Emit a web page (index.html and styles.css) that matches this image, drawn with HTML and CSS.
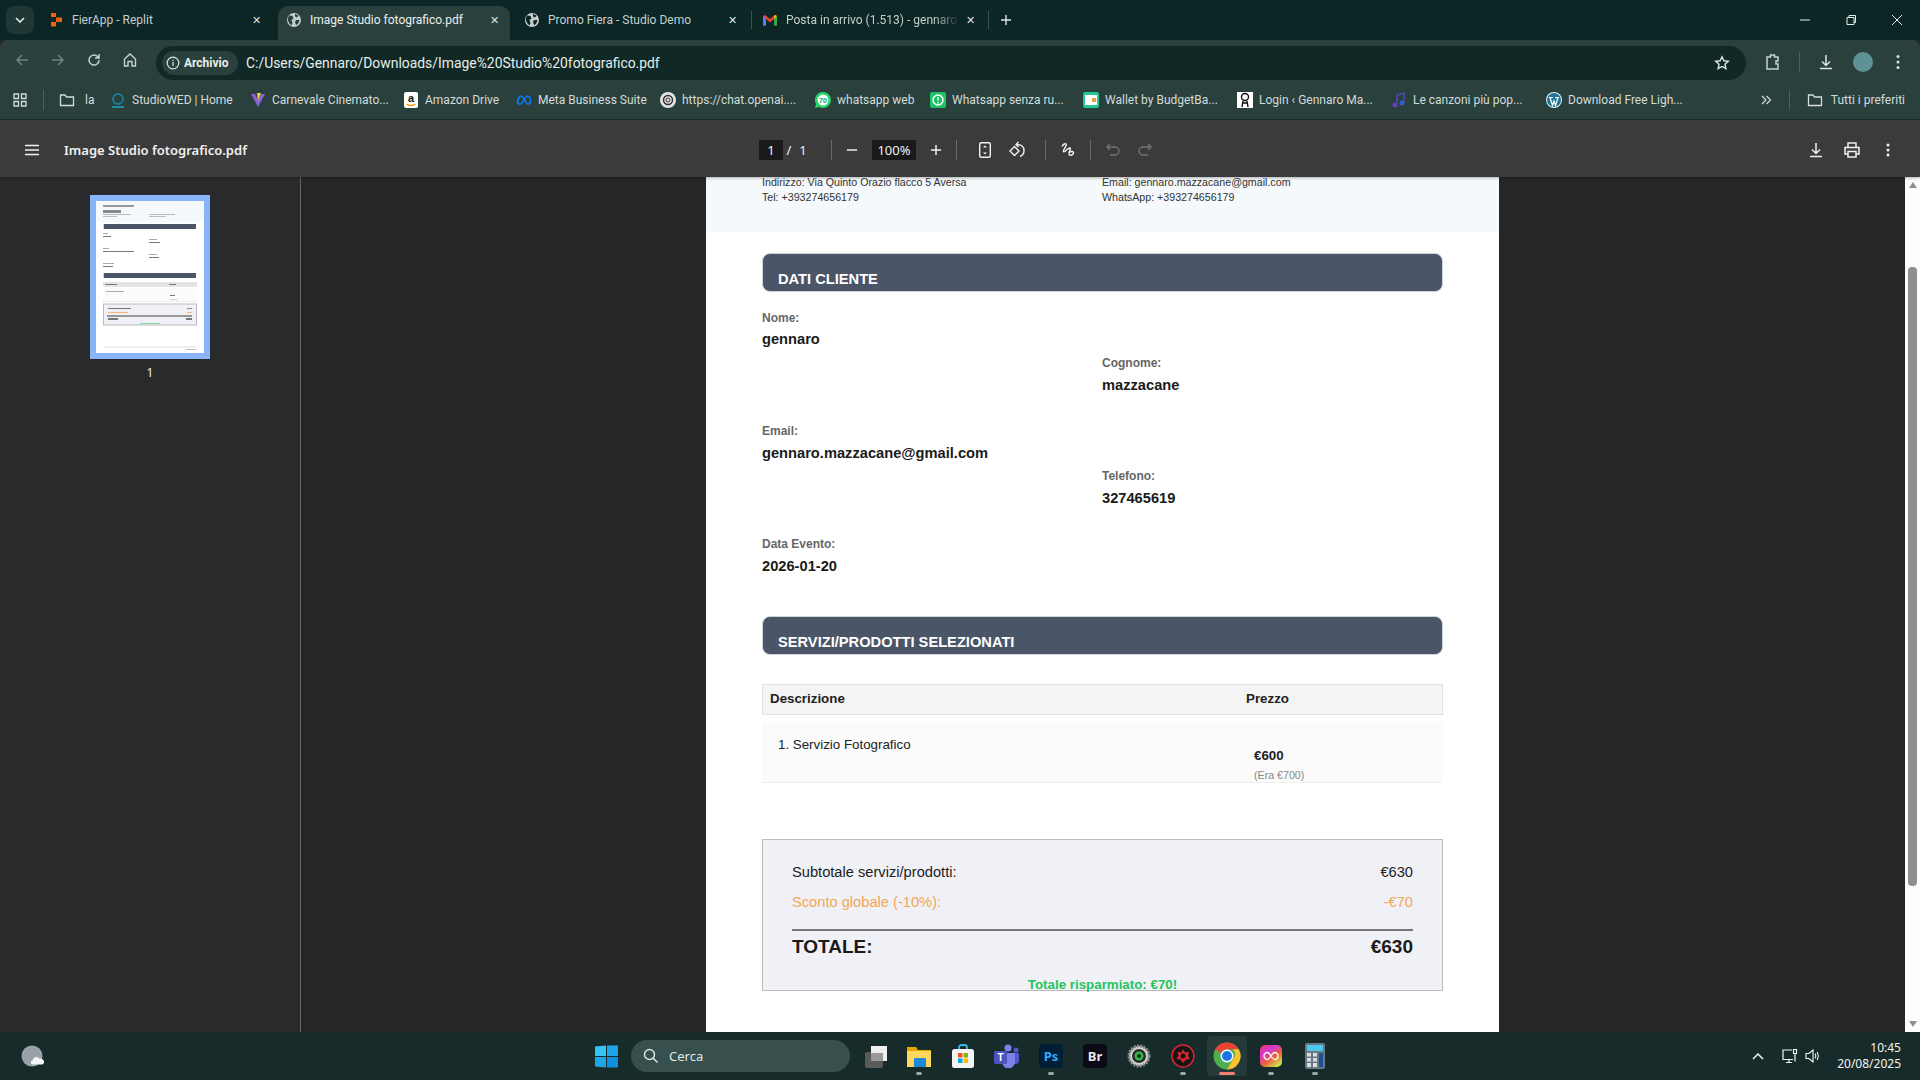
FILE: index.html
```html
<!DOCTYPE html>
<html lang="it">
<head>
    <meta charset="UTF-8">
    <title>Image Studio fotografico.pdf</title>
    <link rel="stylesheet" href="styles.css">
</head>
<body>
    <!-- tab strip -->
    <div class="tabstrip">
        <div class="tab-search"><svg width="10" height="6" viewBox="0 0 10 6"><path d="M1 1l4 4 4-4" fill="none" stroke="#e3ebe9" stroke-width="1.6"/></svg></div>
        <div class="tab">
            <svg class="tab-icon" viewBox="0 0 16 16"><path d="M3 1h5v4H3zM8 5.500h6v4.500H8zM3 10h5v4.500H3z" fill="#f26207"/></svg>
            <span class="tab-title">FierApp - Replit</span>
            <span class="tab-close">✕</span>
        </div>
        <div class="tab tab-active">
            <svg class="tab-icon" viewBox="0 0 16 16"><circle cx="8" cy="8" r="7" fill="#c3cdcb"/><path d="M3 3.500l3.500.5 1 2.500-2 1.500 1 3-1 2.500C3.500 12 1.500 9 2 6zM9 2l3.500 1.500-1.500 2-2-1zM10 8l3.500 0-1.500 4-2 1-1-3z" fill="#2a403d"/></svg>
            <span class="tab-title">Image Studio fotografico.pdf</span>
            <span class="tab-close">✕</span>
        </div>
        <div class="tab">
            <svg class="tab-icon" viewBox="0 0 16 16"><circle cx="8" cy="8" r="7" fill="#c3cdcb"/><path d="M3 3.500l3.500.5 1 2.500-2 1.500 1 3-1 2.500C3.500 12 1.500 9 2 6zM9 2l3.500 1.500-1.500 2-2-1zM10 8l3.500 0-1.500 4-2 1-1-3z" fill="#0c2625"/></svg>
            <span class="tab-title">Promo Fiera - Studio Demo</span>
            <span class="tab-close">✕</span>
        </div>
        <div class="tab tab-sep">
            <svg class="tab-icon" viewBox="0 0 16 16"><path d="M1 13.500V4l2 -1 5 4 5-4 2 1v9.500h-3V7L8 10.500 4 7v6.500z" fill="#ea4335"/><path d="M1 4v9.500h3V7z" fill="#4285f4"/><path d="M15 4v9.500h-3V7z" fill="#34a853"/><path d="M12 7l3-3-2-1-1 1z" fill="#fbbc04"/></svg>
            <span class="tab-title tab-title-fade">Posta in arrivo (1.513) - gennaro</span>
            <span class="tab-close">✕</span>
        </div>
        <div class="tab-new">
            <svg width="12" height="12" viewBox="0 0 12 12"><path d="M6 1v10M1 6h10" stroke="#dfe7e5" stroke-width="1.400"/></svg>
        </div>
        <div class="win-controls">
            <svg width="12" height="12" viewBox="0 0 12 12"><path d="M1 6h10" stroke="#e5ecea" stroke-width="1"/></svg>
            <svg width="12" height="12" viewBox="0 0 12 12"><path d="M2 3.500h7v7H2zM4 3.500V1.500h6.500v7H9" fill="none" stroke="#e5ecea" stroke-width="1"/></svg>
            <svg width="12" height="12" viewBox="0 0 12 12"><path d="M1 1l10 10M11 1L1 11" stroke="#e5ecea" stroke-width="1"/></svg>
        </div>
    </div>

    <!-- address bar -->
    <div class="toolbar">
        <div class="nav-btn"><svg width="16" height="16" viewBox="0 0 16 16"><path d="M14 8H3M8 3L3 8l5 5" fill="none" stroke="#6f8482" stroke-width="1.500"/></svg></div>
        <div class="nav-btn"><svg width="16" height="16" viewBox="0 0 16 16"><path d="M2 8h11M8 3l5 5-5 5" fill="none" stroke="#6f8482" stroke-width="1.500"/></svg></div>
        <div class="nav-btn"><svg width="16" height="16" viewBox="0 0 16 16"><path d="M13 8a5 5 0 1 1-1.500-3.500L13 6M13 2v4H9" fill="none" stroke="#c8d2d0" stroke-width="1.500"/></svg></div>
        <div class="nav-btn"><svg width="16" height="16" viewBox="0 0 16 16"><path d="M2.500 7L8 2l5.500 5v7H10V9.500H6V14H2.500z" fill="none" stroke="#c8d2d0" stroke-width="1.400"/></svg></div>
        <div class="omnibox">
            <div class="chip">
                <svg width="14" height="14" viewBox="0 0 14 14"><circle cx="7" cy="7" r="5.800" fill="none" stroke="#dbe4e2" stroke-width="1.200"/><path d="M7 6v4M7 3.800v1.200" stroke="#dbe4e2" stroke-width="1.200"/></svg>
                <span>Archivio</span>
            </div>
            <span class="url">C:/Users/Gennaro/Downloads/Image%20Studio%20fotografico.pdf</span>
            <svg class="star" width="16" height="16" viewBox="0 0 16 16"><path d="M8 1.800l1.900 4 4.400.5-3.300 3 .9 4.400L8 11.500l-3.900 2.200.9-4.400-3.300-3 4.400-.5z" fill="none" stroke="#e0e8e6" stroke-width="1.400"/></svg>
        </div>
        <div class="toolbar-right">
            <svg width="18" height="18" viewBox="0 0 18 18"><path d="M3 4h3.500V2h4v2H14v4h-2v3h2v5H3z" fill="none" stroke="#c8d2d0" stroke-width="1.500"/></svg>
            <span class="toolbar-sep"></span>
            <svg width="18" height="18" viewBox="0 0 18 18"><path d="M9 2v10M5 8.500L9 12.500l4-4M3 15.500h12" fill="none" stroke="#dbe4e2" stroke-width="1.500"/></svg>
            <span class="avatar"></span>
            <svg width="4" height="16" viewBox="0 0 4 16"><circle cx="2" cy="2.500" r="1.500" fill="#dbe4e2"/><circle cx="2" cy="8" r="1.500" fill="#dbe4e2"/><circle cx="2" cy="13.500" r="1.500" fill="#dbe4e2"/></svg>
        </div>
    </div>

    <!-- bookmarks -->
    <div class="bookmarks">
        <svg class="bm-apps" width="14" height="14" viewBox="0 0 14 14"><path d="M1 1h4.500v4.500H1zM8.500 1H13v4.500H8.500zM1 8.500h4.500V13H1zM8.500 8.500H13V13H8.500z" fill="none" stroke="#d3dcda" stroke-width="1.300"/></svg>
        <span class="bm-sep"></span>
        <div class="bm-list">
            <div class="bm bm-first"><svg class="bm-icon" viewBox="0 0 16 16"><path d="M1.500 3h4.500l1.500 2h7v8.500h-13z" fill="none" stroke="#d3dcda" stroke-width="1.300"/></svg><span>la</span></div>
            <div class="bm"><svg class="bm-icon" viewBox="0 0 16 16"><circle cx="8" cy="7" r="5" fill="none" stroke="#1b7f96" stroke-width="1.800"/><path d="M2 15h12" stroke="#1b9fb9" stroke-width="1.600"/></svg><span>StudioWED | Home</span></div>
            <div class="bm"><svg class="bm-icon" viewBox="0 0 16 16"><path d="M1 2l7 13 7-13-4 0-3 6-3-6z" fill="#8a63d2"/><path d="M7 1h4L8 9z" fill="#f7c948"/></svg><span>Carnevale Cinemato...</span></div>
            <div class="bm"><svg class="bm-icon" viewBox="0 0 16 16"><rect x="1" width="14" height="16" rx="2" fill="#fff"/><text x="8" y="10" class="bm-letter">a</text><path d="M3.500 12c3 2 6 2 9 0" fill="none" stroke="#f79400" stroke-width="1.300"/></svg><span>Amazon Drive</span></div>
            <div class="bm"><svg class="bm-icon" viewBox="0 0 16 16"><path d="M1.500 11c0-4 2-7 3.500-7 2.500 0 5 8 7 8 1.500 0 2.500-1.500 2.500-3.500 0-2.500-1.500-4.500-3-4.500-2.500 0-5 8-7 8-1.500 0-3-.5-3-1z" fill="none" stroke="#0a7cff" stroke-width="1.600"/></svg><span>Meta Business Suite</span></div>
            <div class="bm"><svg class="bm-icon" viewBox="0 0 16 16"><circle cx="8" cy="8" r="8" fill="#e4e4e4"/><circle cx="8" cy="8" r="4.500" fill="none" stroke="#333" stroke-width="1.500"/><circle cx="8" cy="8" r="2" fill="none" stroke="#333"/></svg><span>https://chat.openai....</span></div>
            <div class="bm"><svg class="bm-icon" viewBox="0 0 16 16"><path d="M8 0a8 8 0 0 1 0 16c-1.500 0-3-.5-4-1l-4 1 1-4A8 8 0 0 1 8 0z" fill="#25d366"/><circle cx="8" cy="8" r="5.500" fill="#fff"/><text x="8" y="10.500" class="bm-num">70</text></svg><span>whatsapp web</span></div>
            <div class="bm"><svg class="bm-icon" viewBox="0 0 16 16"><rect width="16" height="16" rx="2" fill="#1fc266"/><circle cx="8" cy="8" r="5" fill="none" stroke="#fff" stroke-width="1.500"/><path d="M8 5v3.500M8 10v1.500" stroke="#fff" stroke-width="1.300"/></svg><span>Whatsapp senza ru...</span></div>
            <div class="bm"><svg class="bm-icon" viewBox="0 0 16 16"><rect width="16" height="16" rx="2" fill="#27c49a"/><rect x="2" y="3" width="12" height="10" fill="#fff"/><rect x="9" y="6" width="4" height="4" fill="#f59b42"/></svg><span>Wallet by BudgetBa...</span></div>
            <div class="bm"><svg class="bm-icon" viewBox="0 0 16 16"><rect width="16" height="16" fill="#fff"/><circle cx="8" cy="5" r="3.500" fill="none" stroke="#111" stroke-width="1.400"/><path d="M6 9l-1 6M10 9l1 6M6 11h4" stroke="#111" stroke-width="1.400"/></svg><span>Login ‹ Gennaro Ma...</span></div>
            <div class="bm"><svg class="bm-icon" viewBox="0 0 16 16"><path d="M6 12V3l7-2v9" fill="none" stroke="#4a49b8" stroke-width="1.600"/><circle cx="4" cy="13" r="2.500" fill="#6b3fb5"/><circle cx="11" cy="11" r="2.500" fill="#2e62c9"/></svg><span>Le canzoni più pop...</span></div>
            <div class="bm"><svg class="bm-icon" viewBox="0 0 16 16"><circle cx="8" cy="8" r="8" fill="#e8eef2"/><circle cx="8" cy="8" r="7" fill="#21759b"/><path d="M3 5.500h4M9 5.500h4M4 5.500l2.500 8L8 9l1.500 4.500 2.500-8" fill="none" stroke="#fff" stroke-width="1.200"/></svg><span>Download Free Ligh...</span></div>
        </div>
        <div class="bm-more">
            <svg width="12" height="12" viewBox="0 0 12 12"><path d="M2 2l4 4-4 4M6.500 2l4 4-4 4" fill="none" stroke="#d3dcda" stroke-width="1.200"/></svg>
            <span class="bm-sep"></span>
            <div class="bm"><svg class="bm-icon" viewBox="0 0 16 16"><path d="M1.500 3h4.500l1.500 2h7v8.500h-13z" fill="none" stroke="#d3dcda" stroke-width="1.300"/></svg><span>Tutti i preferiti</span></div>
        </div>
    </div>

    <!-- pdf viewer toolbar -->
    <div class="pdf-toolbar">
        <div class="pdf-left">
            <svg class="pdf-menu" width="16" height="12" viewBox="0 0 16 12"><path d="M1 1.500h14M1 6h14M1 10.500h14" stroke="#f1f1f1" stroke-width="1.500"/></svg>
            <span class="pdf-name">Image Studio fotografico.pdf</span>
        </div>
        <div class="pdf-center">
            <div class="pdf-pages"><span class="pdf-box pdf-box-page">1</span><span class="pdf-slash">/</span><span class="pdf-total">1</span></div>
            <span class="pdf-sep pdf-sep-a"></span>
            <div class="pdf-btn"><svg width="12" height="12" viewBox="0 0 12 12"><path d="M1 6h10" stroke="#f1f1f1" stroke-width="1.500"/></svg></div>
            <span class="pdf-box pdf-box-zoom">100%</span>
            <div class="pdf-btn"><svg width="12" height="12" viewBox="0 0 12 12"><path d="M1 6h10M6 1v10" stroke="#f1f1f1" stroke-width="1.500"/></svg></div>
            <span class="pdf-sep pdf-sep-b"></span>
            <div class="pdf-btn"><svg width="14" height="18" viewBox="0 0 14 18"><rect x="1.700" y="1.700" width="10.600" height="14.600" rx="1.500" fill="none" stroke="#f1f1f1" stroke-width="1.400"/><path d="M5 6.500l2-2 2 2M5 11.500l2 2 2-2" fill="#f1f1f1"/></svg></div>
            <div class="pdf-btn"><svg width="18" height="18" viewBox="0 0 18 18"><path d="M6.500 5.500l4.500 4.500-4.500 4.500L2 10z" fill="none" stroke="#f1f1f1" stroke-width="1.400"/><path d="M8.500 3.500c4-.5 7.500 2 7.500 6 0 2.500-1.500 5-4 6M10.500 1L8 3.500l2.500 2.500" fill="none" stroke="#f1f1f1" stroke-width="1.400"/></svg></div>
            <span class="pdf-sep pdf-sep-c"></span>
            <div class="pdf-btn"><svg width="16" height="16" viewBox="0 0 16 16"><path d="M2 4.500C3 2.500 5 1 6 2c1.500 1.500-3.500 6-2.500 7.500 1.200 1.500 4.500-4 6.500-3.500 1.500.5-1.500 3.500-1 6 .5 2 4 1.500 4.500-1 .3-1.800-2.500-2-4 -.5" fill="none" stroke="#f1f1f1" stroke-width="1.400"/></svg></div>
            <span class="pdf-sep pdf-sep-d"></span>
            <div class="pdf-btn"><svg width="16" height="16" viewBox="0 0 16 16"><path d="M5 2L2 5l3 3M2 5h8a3.500 3.500 0 0 1 0 8H5" fill="none" stroke="#737373" stroke-width="1.400"/></svg></div>
            <div class="pdf-btn"><svg width="16" height="16" viewBox="0 0 16 16"><path d="M11 2l3 3-3 3M14 5H6a3.500 3.500 0 0 0 0 8h5" fill="none" stroke="#737373" stroke-width="1.400"/></svg></div>
        </div>
        <div class="pdf-right">
            <div class="pdf-rbtn"><svg width="16" height="18" viewBox="0 0 16 18"><path d="M8 2v10M4 8.500l4 4 4-4M2 15.500h12" fill="none" stroke="#f1f1f1" stroke-width="1.500"/></svg></div>
            <div class="pdf-rbtn"><svg width="18" height="18" viewBox="0 0 18 18"><path d="M5 6V2h8v4M5 13H2V6.500h14V13h-3M5 10.500h8V16H5z" fill="none" stroke="#f1f1f1" stroke-width="1.500"/></svg></div>
            <div class="pdf-rbtn"><svg width="4" height="14" viewBox="0 0 4 14"><circle cx="2" cy="2" r="1.500" fill="#f1f1f1"/><circle cx="2" cy="7" r="1.500" fill="#f1f1f1"/><circle cx="2" cy="12" r="1.500" fill="#f1f1f1"/></svg></div>
        </div>
    </div>

    <div class="viewer">
        <aside class="sidebar">
            <div class="thumb">
                <svg class="thumb-page" viewBox="0 0 108 152">
                    <rect width="108" height="152" fill="#fff"/>
                    <rect width="108" height="21" fill="#f5f9fc"/>
                    <g fill="#999">
                        <rect x="7" y="4" width="31" height="2"/><rect x="7" y="9" width="18" height="3" fill="#888"/>
                        <rect x="7" y="13" width="28" height="1" fill="#bbb"/><rect x="7" y="15" width="14" height="1" fill="#bbb"/>
                        <rect x="53" y="13" width="26" height="1" fill="#bbb"/><rect x="53" y="15" width="17" height="1" fill="#bbb"/>
                    </g>
                    <rect x="7" y="23" width="93" height="5" fill="#cfd2d7"/><rect x="8" y="23" width="92" height="5" fill="#4a5568"/>
                    <g fill="#aaa">
                        <rect x="7" y="32" width="5" height="1"/><rect x="53" y="38" width="8" height="1"/><rect x="7" y="47" width="6" height="1"/><rect x="53" y="53" width="8" height="1"/><rect x="7" y="62" width="11" height="1"/>
                    </g>
                    <g fill="#777">
                        <rect x="7" y="35" width="8" height="1"/><rect x="53" y="41" width="11" height="1"/><rect x="7" y="50" width="31" height="1"/><rect x="53" y="56" width="10" height="1"/><rect x="7" y="65" width="10" height="1"/>
                    </g>
                    <rect x="7" y="72" width="93" height="5" fill="#cfd2d7"/><rect x="8" y="72" width="92" height="5" fill="#4a5568"/>
                    <rect x="7" y="81" width="94" height="5" fill="#e4e4e4"/>
                    <rect x="9" y="83" width="12" height="1" fill="#777"/><rect x="73" y="83" width="7" height="1" fill="#777"/>
                    <rect x="7" y="87" width="93" height="14" fill="#fbfbfb"/>
                    <rect x="10" y="90" width="18" height="1" fill="#aaa"/><rect x="74" y="94" width="5" height="1" fill="#777"/><rect x="74" y="98" width="7" height="1" fill="#ccc"/>
                    <rect x="7" y="100" width="93" height="1" fill="#eee"/>
                    <rect x="7.500" y="103" width="93" height="21" fill="#f0f1f6" stroke="#bbb" stroke-width="1"/>
                    <rect x="12" y="107" width="23" height="1" fill="#777"/><rect x="91" y="107" width="5" height="1" fill="#888"/>
                    <rect x="12" y="111" width="20" height="1" fill="#f6b77a"/><rect x="91" y="111" width="5" height="1" fill="#f6b77a"/>
                    <rect x="11" y="114" width="85" height="2" fill="#999"/>
                    <rect x="12" y="117" width="10" height="2" fill="#777"/><rect x="90" y="117" width="6" height="2" fill="#777"/>
                    <rect x="44" y="122" width="20" height="1" fill="#86d9a6"/>
                    <rect x="8" y="145" width="92" height="2" fill="#eee"/>
                    <rect x="90" y="148" width="10" height="1" fill="#bbb"/>
                </svg>
            </div>
            <span class="thumb-num">1</span>
        </aside>

        <main class="canvas">
            <div class="pdf-page">
                <header class="doc-head">
                    <div class="doc-head-col">
                        <p>Indirizzo: Via Quinto Orazio flacco 5 Aversa</p>
                        <p>Tel: +393274656179</p>
                    </div>
                    <div class="doc-head-col">
                        <p>Email: gennaro.mazzacane@gmail.com</p>
                        <p>WhatsApp: +393274656179</p>
                    </div>
                </header>
                <div class="doc-body">
                    <h2 class="doc-section">DATI CLIENTE</h2>
                    <div class="fields">
                        <div class="field"><div class="field-label">Nome:</div><div class="field-value">gennaro</div></div>
                        <div class="field field-right"><div class="field-label">Cognome:</div><div class="field-value">mazzacane</div></div>
                        <div class="field"><div class="field-label">Email:</div><div class="field-value">gennaro.mazzacane@gmail.com</div></div>
                        <div class="field field-right"><div class="field-label">Telefono:</div><div class="field-value">327465619</div></div>
                        <div class="field"><div class="field-label">Data Evento:</div><div class="field-value">2026-01-20</div></div>
                    </div>
                    <h2 class="doc-section doc-section-2">SERVIZI/PRODOTTI SELEZIONATI</h2>
                    <div class="items">
                        <div class="items-head"><span>Descrizione</span><span>Prezzo</span></div>
                        <div class="items-row">
                            <div class="item-name">1. Servizio Fotografico</div>
                            <div class="item-price"><strong>€600</strong><small>(Era €700)</small></div>
                        </div>
                    </div>
                    <section class="summary">
                        <div class="sum-row"><span>Subtotale servizi/prodotti:</span><span>€630</span></div>
                        <div class="sum-row sum-discount"><span>Sconto globale (-10%):</span><span>-€70</span></div>
                        <div class="sum-row sum-total"><span>TOTALE:</span><span>€630</span></div>
                        <div class="sum-saved">Totale risparmiato: €70!</div>
                    </section>
                </div>
            </div>
        </main>

        <div class="scrollbar">
            <span class="arrow-up"></span>
            <span class="scroll-thumb"></span>
            <span class="arrow-down"></span>
        </div>
    </div>

    <!-- windows taskbar -->
    <footer class="taskbar">
        <svg class="weather" width="24" height="24" viewBox="0 0 24 24"><circle cx="11" cy="12" r="10.500" fill="#9aa1a9"/><path d="M12 20.500c-2.500 0-3-3.500-.5-4 .5-3.500 5-4.500 6.500-2 3-.5 5.500 1.500 5 4-.3 1.200-1 2-2 2z" fill="#f2f4f6"/></svg>
        <svg class="start" width="23" height="23" viewBox="0 0 23 23"><path d="M0 1.500L11 .5V11H0z" fill="#35c4f5"/><path d="M12 .5l11 0V11H12z" fill="#1fa6ea"/><path d="M0 12h11v10.500L0 21.500z" fill="#1fa6ea"/><path d="M12 12h11v10.500H12z" fill="#0f8fdd"/></svg>
        <div class="search">
            <svg width="16" height="16" viewBox="0 0 16 16"><circle cx="6.500" cy="6.500" r="5" fill="none" stroke="#dfe7e5" stroke-width="1.400"/><path d="M10 10l4.500 4.500" stroke="#dfe7e5" stroke-width="1.400"/></svg>
            <span>Cerca</span>
        </div>
        <div class="apps">
            <div class="app"><svg width="24" height="24" viewBox="0 0 24 24"><rect x="2" y="8" width="18" height="16" rx="2" fill="#5a5a5a"/><rect x="8" y="2" width="16" height="15" fill="#eeeeee"/><rect x="8" y="9" width="12" height="8" fill="#9a9a9a"/></svg></div>
            <div class="app app-open"><svg width="24" height="22" viewBox="0 0 24 22"><path d="M0 2h9l2 3h13v17H0z" fill="#e8a600"/><rect y="6" width="24" height="16" fill="#ffd75e"/><rect x="7" y="13" width="12" height="9" rx="1" fill="#1e88d2"/></svg></div>
            <div class="app"><svg width="24" height="24" viewBox="0 0 24 24"><path d="M8 6V3.500C8 2 9 1 10.500 1h3C15 1 16 2 16 3.500V6" fill="none" stroke="#35b8ee" stroke-width="1.800"/><rect x="1" y="5" width="22" height="19" rx="2.500" fill="#f4f4f4"/><rect x="7" y="9" width="4.500" height="4.500" fill="#f25022"/><rect x="12.500" y="9" width="4.500" height="4.500" fill="#7fba00"/><rect x="7" y="14.500" width="4.500" height="4.500" fill="#00a4ef"/><rect x="12.500" y="14.500" width="4.500" height="4.500" fill="#ffb900"/></svg></div>
            <div class="app"><svg width="26" height="24" viewBox="0 0 26 24"><circle cx="14" cy="4" r="3.500" fill="#7b83eb"/><circle cx="22" cy="6" r="2.500" fill="#5059c9"/><path d="M17 9h8v7a4 4 0 0 1-8 0z" fill="#5059c9"/><path d="M8 9h13v9a6 6 0 0 1-13 0z" fill="#7b83eb"/><rect y="7" width="13" height="13" rx="1.500" fill="#4b53bc"/><text x="6.500" y="17" class="app-letter">T</text></svg></div>
            <div class="app app-open"><div class="app-tile app-ps">Ps</div></div>
            <div class="app"><div class="app-tile app-br">Br</div></div>
            <div class="app"><svg width="24" height="24" viewBox="0 0 24 24"><circle cx="12" cy="12" r="10" fill="#d8d8d8" stroke="#8c8c8c" stroke-width="3" stroke-dasharray="2 1.200"/><circle cx="12" cy="12" r="7" fill="#2b2b2b"/><circle cx="12" cy="12" r="4.500" fill="#35b54a"/><circle cx="12" cy="12" r="2" fill="#0c2a12"/></svg></div>
            <div class="app app-open"><svg width="24" height="24" viewBox="0 0 24 24"><circle cx="12" cy="12" r="11" fill="#161616" stroke="#d8262c" stroke-width="1.500"/><path d="M12 5l2 3.500 4-.5-1 4 2 3-4 .5L12 19l-2.500-3.500-4-.5 2-3-1-4 4 .5z" fill="#d8262c"/><circle cx="12" cy="12" r="2.500" fill="#161616"/></svg></div>
            <div class="app app-active"><svg width="28" height="28" viewBox="0 0 28 28"><circle cx="14" cy="14" r="13.500" fill="#4caf50"/><path d="M14 .5a13.500 13.500 0 0 1 11.700 6.750H14a7 7 0 0 0-6.500 4.200L2.600 6.800A13.500 13.500 0 0 1 14 .5z" fill="#ea4335"/><path d="M25.700 7.250A13.500 13.500 0 0 1 14 27.500l5.800-10A7 7 0 0 0 20 7.250z" fill="#fbc02d"/><circle cx="14" cy="14" r="6.500" fill="#fff"/><circle cx="14" cy="14" r="5" fill="#1a73e8"/></svg></div>
            <div class="app app-open"><svg width="24" height="24" viewBox="0 0 24 24"><defs><linearGradient id="cc" x1="0" y1="0" x2="0.700" y2="1"><stop offset="0" stop-color="#f5305f"/><stop offset=".35" stop-color="#d23ad8"/><stop offset=".65" stop-color="#f05a3c"/><stop offset="1" stop-color="#c8e04a"/></linearGradient></defs><rect x="1" y="1" width="22" height="22" rx="5" fill="url(#cc)"/><path d="M8.500 15.500a3.500 3.500 0 0 1 0-7c2.500 0 4.500 7 7 7a3.500 3.500 0 0 0 0-7c-2.500 0-4.500 7-7 7z" fill="none" stroke="#fff" stroke-width="1.300"/></svg></div>
            <div class="app app-open"><svg width="20" height="26" viewBox="0 0 20 26"><rect width="20" height="26" rx="2" fill="#6a7785"/><rect x="2" y="2" width="16" height="6" fill="#4dc9ee"/><path d="M2 10h4v3.500H2zM8 10h4v3.500H8zM2 15h4v3.500H2zM8 15h4v3.500H8zM2 20h4v4H2zM8 20h4v4H8z" fill="#d9dee2"/><rect x="14" y="10" width="4" height="14" fill="#1e4f8f"/></svg></div>
        </div>
        <div class="tray">
            <svg width="12" height="8" viewBox="0 0 12 8"><path d="M1 7l5-5 5 5" fill="none" stroke="#f2f5f4" stroke-width="1.500"/></svg>
            <svg class="tray-net" width="16" height="16" viewBox="0 0 16 16"><path d="M11 11.500H1V2h9M4 14.500h6M7 11.500v3" fill="none" stroke="#f2f5f4" stroke-width="1.200"/><path d="M11.500 1.500h3v4h-3zM13 5.500v8" fill="none" stroke="#f2f5f4" stroke-width="1.200"/></svg>
            <svg class="tray-vol" width="16" height="16" viewBox="0 0 16 16"><path d="M1 5.500h3L8 2v12L4 10.500H1z" fill="none" stroke="#f2f5f4" stroke-width="1.100"/><path d="M10 5.500c1 1.500 1 3.500 0 5M12 4c1.500 2.500 1.500 5.500 0 8" fill="none" stroke="#f2f5f4" stroke-width="1.100"/></svg>
            <div class="clock"><span>10:45</span><span>20/08/2025</span></div>
        </div>
    </footer>
</body>
</html>
```

FILE: styles.css
```css
* {
    box-sizing: border-box;
}
html, body {
    margin: 0;
    height: 1080px;
    overflow: hidden;
}
body {
    display: flex;
    flex-direction: column;
    width: 1920px;
    font-family: "Noto Sans", sans-serif;
    background: #262626;
}
p, h2 {
    margin: 0;
}

/* tab strip */
.tabstrip {
    display: flex;
    align-items: flex-end;
    height: 40px;
    flex-shrink: 0;
    padding-left: 6px;
    background: #0c2625;
    font-family: Roboto, sans-serif;
}
.tab-search {
    display: flex;
    align-items: center;
    justify-content: center;
    width: 28px;
    height: 28px;
    margin: 0 6px 6px 0;
    border-radius: 8px;
    background: #1f3836;
}
.tab {
    display: flex;
    align-items: center;
    gap: 8px;
    width: 232px;
    height: 34px;
    margin-right: 6px;
    padding: 0 8px 6px;
    border-radius: 10px 10px 0 0;
    color: #c4cfcd;
    font-size: 12px;
}
.tab-active {
    background: #2a403d;
    color: #eaf0ee;
}
.tab-icon {
    width: 16px;
    height: 16px;
    flex-shrink: 0;
}
.tab-title {
    flex: 1;
    white-space: nowrap;
    overflow: hidden;
}
.tab-title-fade {
    flex: none;
    width: 174px;
    margin-right: -6px;
    -webkit-mask-image: linear-gradient(to right, #000 85%, transparent);
    mask-image: linear-gradient(to right, #000 85%, transparent);
}
.tab-close {
    width: 16px;
    text-align: center;
    font-size: 11px;
    color: #dbe4e2;
}
.tab-sep {
    position: relative;
    margin-right: 0;
}
.tab-sep::before {
    content: "";
    position: absolute;
    left: -3px;
    top: 5px;
    height: 18px;
    border-left: 1px solid #3d5350;
}
.tab-sep::after {
    content: "";
    position: absolute;
    right: -3px;
    top: 5px;
    height: 18px;
    border-left: 1px solid #3d5350;
}
.tab-new {
    display: flex;
    align-items: center;
    height: 34px;
    margin-left: 14px;
    padding-bottom: 6px;
}
.win-controls {
    display: flex;
    gap: 34px;
    align-items: center;
    height: 40px;
    margin-left: auto;
    padding-right: 17px;
}

/* address bar */
.toolbar {
    display: flex;
    align-items: center;
    height: 40px;
    flex-shrink: 0;
    padding-left: 4px;
    border-radius: 8px 8px 0 0;
    background: #2a403d;
    font-family: Roboto, sans-serif;
}
.nav-btn {
    display: flex;
    justify-content: center;
    width: 36px;
}
.omnibox {
    display: flex;
    align-items: center;
    width: 1590px;
    height: 34px;
    margin: 6px 0 0 8px;
    padding: 0 16px 0 6px;
    border-radius: 17px;
    background: #102826;
}
.chip {
    display: flex;
    align-items: center;
    gap: 4px;
    width: 76px;
    height: 24px;
    padding-left: 4px;
    border-radius: 12px;
    background: #2a403d;
    color: #e6eeec;
    font-size: 12px;
    font-weight: 700;
}
.url {
    margin-left: 8px;
    color: #e6eeec;
    font-size: 13.900px;
}
.star {
    margin-left: auto;
}
.toolbar-right {
    display: flex;
    align-items: center;
    margin: 4px 0 0 18px;
    gap: 26px;
}
.toolbar-sep {
    width: 1px;
    height: 20px;
    margin: 0 -9px;
    background: #4b605d;
}
.avatar {
    width: 20px;
    height: 20px;
    margin: 0 -3px 0 -8px;
    border-radius: 50%;
    background: #5f9296;
}

/* bookmarks */
.bookmarks {
    display: flex;
    align-items: center;
    height: 40px;
    flex-shrink: 0;
    padding-left: 13px;
    border-bottom: 1px solid #1c302e;
    background: #2a403d;
    color: #d3dcda;
    font-family: Roboto, sans-serif;
    font-size: 12px;
}
.bm-list {
    display: grid;
    grid-template-columns: 51px 140px 153px 113px 144px 155px 115px 153px 154px 154px 155px auto;
    margin-left: 15px;
}
.bm {
    display: flex;
    align-items: center;
    gap: 6px;
    white-space: nowrap;
}
.bm-first {
    gap: 10px;
}
.bm-icon {
    width: 16px;
    height: 16px;
    flex-shrink: 0;
}
.bm-letter {
    font: bold 11px "Liberation Sans", sans-serif;
    text-anchor: middle;
    fill: #111;
}
.bm-num {
    font: bold 7px "Liberation Sans", sans-serif;
    text-anchor: middle;
    fill: #129c4b;
}
.bm-sep {
    width: 1px;
    height: 20px;
    margin-left: 16px;
    background: #4b605d;
}
.bm-more {
    display: flex;
    align-items: center;
    margin-left: auto;
    padding-right: 15px;
}
.bm-more .bm-sep {
    margin-left: 17px;
}
.bm-more .bm {
    gap: 8px;
    margin-left: 17px;
}

/* pdf toolbar */
.pdf-toolbar {
    display: flex;
    align-items: center;
    height: 57px;
    flex-shrink: 0;
    padding-top: 2px;
    background: #3b3b3b;
    color: #f1f1f1;
    box-shadow: 0 1px 3px rgba(0,0,0,0.3);
    position: relative;
    z-index: 1;
}
.pdf-left {
    display: flex;
    align-items: center;
    width: 759px;
    padding-left: 24px;
    flex-shrink: 0;
}
.pdf-name {
    margin-left: 24px;
    font-size: 13px;
    font-weight: 600;
}
.pdf-center {
    display: flex;
    align-items: center;
    gap: 8px;
    font-size: 13px;
}
.pdf-pages {
    display: flex;
    align-items: center;
}
.pdf-box {
    display: flex;
    align-items: center;
    justify-content: center;
    height: 20px;
    background: #191919;
}
.pdf-box-page {
    width: 24px;
}
.pdf-box-zoom {
    width: 44px;
}
.pdf-slash {
    width: 12px;
    text-align: center;
}
.pdf-total {
    width: 16px;
    text-align: center;
}
.pdf-sep {
    width: 1px;
    height: 20px;
    background: #6a6a6a;
}
.pdf-sep-a {
    margin-left: 12px;
}
.pdf-sep-b {
    margin-right: 8px;
}
.pdf-sep-c {
    margin: 0 2px 0 8px;
}
.pdf-sep-d {
    margin: 0 2px;
}
.pdf-btn {
    display: flex;
    align-items: center;
    justify-content: center;
    width: 24px;
    height: 24px;
}
.pdf-right {
    display: flex;
    align-items: center;
    margin-left: auto;
    padding-right: 14px;
}
.pdf-rbtn {
    display: flex;
    justify-content: center;
    width: 36px;
}

/* viewer */
.viewer {
    display: flex;
    flex: 1;
    min-height: 0;
}
.sidebar {
    display: flex;
    flex-direction: column;
    align-items: center;
    width: 301px;
    flex-shrink: 0;
    padding-top: 18px;
    border-right: 1px solid #666;
    background: #292a2c;
}
.thumb {
    width: 120px;
    height: 164px;
    overflow: hidden;
    border: 6px solid #8ab4f8;
}
.thumb-page {
    display: block;
    width: 108px;
    height: 152px;
    filter: blur(0.6px);
}
.thumb-num {
    margin-top: 5px;
    color: #f1f1f1;
    font-size: 12px;
    line-height: 17px;
}
.canvas {
    flex: 1;
    display: flex;
    justify-content: center;
    padding-right: 1px;
    overflow: hidden;
    background: #262626;
}
.pdf-page {
    width: 793px;
    height: 855px;
    overflow: hidden;
    background: #fff;
    font-family: "Liberation Sans", Arial, sans-serif;
    color: #222;
}
.doc-head {
    display: flex;
    height: 55px;
    padding-left: 56px;
    background: #f5f9fc;
    font-size: 10.670px;
    line-height: 15px;
    color: #333;
}
.doc-head-col {
    width: 340px;
    margin-top: -2px;
}
.doc-body {
    padding: 21px 56px 0 56px;
}
.doc-section {
    height: 39px;
    padding: 16px 15px 0;
    border: 1px solid #d0d3d8;
    border-radius: 8px;
    background: #4a5568;
    color: #fff;
    font-size: 14.670px;
    line-height: 18px;
}
.doc-section-2 {
    margin-top: 34px;
}
.fields {
    padding-top: 19px;
}
.field {
    height: 45px;
}
.field-right {
    margin: 0 0 23px 340px;
}
.field-label {
    color: #666;
    font-size: 12px;
    font-weight: bold;
    line-height: 14px;
}
.field-value {
    margin-top: 6px;
    color: #1a1a1a;
    font-size: 14.670px;
    font-weight: bold;
    line-height: 18px;
}
.field:first-child .field-value {
    margin-top: 5px;
}
.items {
    margin-top: 29px;
    font-size: 13.330px;
}
.items-head,
.items-row {
    display: grid;
    grid-template-columns: 476px 1fr;
}
.items-head {
    height: 31px;
    align-items: center;
    padding-bottom: 3px;
    border: 1px solid #e2e2e2;
    background: #f4f4f4;
    font-weight: bold;
}
.items-head span {
    padding-left: 7px;
}
.items-row {
    height: 61px;
    margin-top: 7px;
    border-bottom: 1px solid #eee;
    background: #fbfbfb;
}
.item-name {
    padding: 15px 0 0 16px;
    line-height: 16px;
}
.item-price {
    display: flex;
    flex-direction: column;
    padding: 27px 0 0 16px;
}
.item-price strong {
    font-size: 13.330px;
    line-height: 14px;
}
.item-price small {
    margin-top: 6px;
    font-size: 10.670px;
    line-height: 13px;
    color: #888;
}
.summary {
    height: 152px;
    margin-top: 56px;
    padding: 23px 29px 0 29px;
    border: 1px solid #bbb;
    background: #f0f1f6;
}
.sum-row {
    display: flex;
    justify-content: space-between;
    height: 30px;
    font-size: 14.670px;
    line-height: 18px;
}
.sum-discount {
    color: #f6a552;
}
.sum-total {
    height: 32px;
    margin-top: 6px;
    padding-top: 4px;
    border-top: 2px solid #777;
    font-size: 19px;
    font-weight: bold;
    line-height: 23px;
    color: #1a1a1a;
}
.sum-saved {
    margin-top: 16px;
    text-align: center;
    font-size: 13.330px;
    font-weight: bold;
    line-height: 16px;
    color: #22c55e;
}
.scrollbar {
    display: flex;
    flex-direction: column;
    align-items: center;
    width: 15px;
    flex-shrink: 0;
    padding-top: 5px;
    background: #fdfdfd;
}
.arrow-up,
.arrow-down {
    width: 0;
    height: 0;
    border-left: 4.500px solid transparent;
    border-right: 4.500px solid transparent;
}
.arrow-up {
    border-bottom: 6px solid #8f8f8f;
}
.arrow-down {
    margin-top: auto;
    margin-bottom: 5px;
    border-top: 6px solid #8f8f8f;
}
.scroll-thumb {
    width: 9px;
    height: 619px;
    margin-top: 79px;
    border-radius: 4px;
    background: #8f8f8f;
}

/* taskbar */
.taskbar {
    display: flex;
    align-items: center;
    height: 48px;
    flex-shrink: 0;
    padding-left: 21px;
    background: #182b2b;
    color: #f2f5f4;
}
.start {
    margin-left: 550px;
}
.search {
    display: flex;
    align-items: center;
    gap: 10px;
    width: 219px;
    height: 32px;
    margin-left: 13px;
    padding-left: 12px;
    border-radius: 16px;
    background: #38504d;
    color: #dfe7e5;
    font-size: 13px;
}
.apps {
    display: flex;
    margin-left: 3px;
}
.app {
    position: relative;
    display: flex;
    align-items: center;
    justify-content: center;
    width: 44px;
    height: 40px;
}
.app-open::after,
.app-active::after {
    content: "";
    position: absolute;
    bottom: 1px;
    left: 19px;
    width: 6px;
    height: 3px;
    border-radius: 2px;
    background: #9aa5a4;
}
.app-active {
    width: 40px;
    margin: 0 2px;
    border-radius: 4px;
    background: #253a39;
}
.app-active::after {
    left: 12px;
    width: 16px;
    background: #f08070;
}
.app-tile {
    display: flex;
    align-items: center;
    justify-content: center;
    width: 24px;
    height: 24px;
    border-radius: 4px;
    font-size: 13px;
    font-weight: 700;
}
.app-ps {
    background: #001e36;
    color: #31a8ff;
}
.app-br {
    background: #0a0a16;
    color: #e8e8e8;
}
.app-letter {
    font: bold 10px "Liberation Sans", sans-serif;
    text-anchor: middle;
    fill: #fff;
}
.tray {
    display: flex;
    align-items: center;
    margin-left: auto;
    padding-right: 19px;
}
.tray-net {
    margin-left: 18px;
}
.tray-vol {
    margin-left: 7px;
}
.clock {
    display: flex;
    flex-direction: column;
    align-items: flex-end;
    margin-left: 16px;
    font-size: 12px;
    line-height: 16px;
}
```
